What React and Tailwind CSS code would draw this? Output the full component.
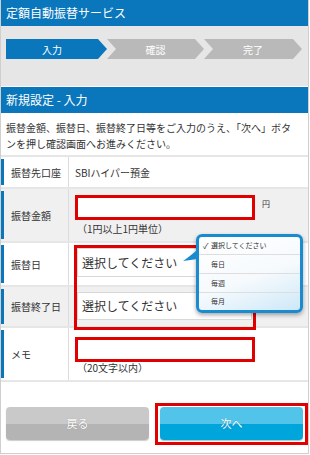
const font = { fontFamily: '"Noto Sans CJK JP", "Noto Sans", sans-serif' }

function Steps() {
  return (
    <div className="flex h-[20px] text-[10px] text-white">
      <div className="w-[101px] flex items-center justify-center pr-[9px] bg-[#0a77bc] [clip-path:polygon(0_0,calc(100%-9px)_0,100%_50%,calc(100%-9px)_100%,0_100%)]">
        入力
      </div>
      <div className="w-[97px] flex items-center justify-center bg-[#b9b9b9] [clip-path:polygon(0_0,calc(100%-9px)_0,100%_50%,calc(100%-9px)_100%,0_100%,9px_50%)]">
        確認
      </div>
      <div className="w-[98px] flex items-center justify-center bg-[#b9b9b9] [clip-path:polygon(0_0,calc(100%-9px)_0,100%_50%,calc(100%-9px)_100%,0_100%,9px_50%)]">
        完了
      </div>
    </div>
  )
}

function Row({ label, gray, height, center = true, children }) {
  return (
    <div className={`flex border-b-2 border-[#e6e6e6] ${gray ? 'bg-[#f0f0f0]' : 'bg-white'}`} style={{ height }}>
      <div className="w-[68px] flex border-r border-[#dcdcdc] shrink-0">
        <div className="w-[3px] my-[2px] bg-[#0a77bc]" />
        <div className="flex items-center pl-[7px] text-[10px] text-[#333]">{label}</div>
      </div>
      <div className={`flex-1 pl-[8px] ${center ? 'flex items-center' : ''}`}>{children}</div>
    </div>
  )
}

function RedBox({ className }) {
  return <div className={`absolute border-[3px] border-[#e00000] pointer-events-none ${className}`} />
}

function Select() {
  return (
    <div className="w-[175px] h-full bg-white border border-[#d8d8d8] flex items-center pl-[4px] text-[12px] text-[#333]">
      選択してください
    </div>
  )
}

export default function App() {
  return (
    <div className="w-[310px] h-[455px] bg-white" style={font}>
      <div className="w-[309px] h-[454px] border-x border-b border-[#cfcfcf]">
        <div className="h-[26px] bg-[#0a77bc] flex items-center pl-[5px] text-[12px] text-white">
          定額自動振替サービス
        </div>

        <div className="h-[61px] bg-[#e6e6e6] border-b border-white pt-[13px] pl-[5px]">
          <Steps />
        </div>

        <div className="h-[26px] bg-[#0a77bc] flex items-center pl-[5px] text-[12px] text-white">
          新規設定 - 入力
        </div>

        <div className="h-[42px] pt-[7px] pl-[5px] pr-[10px] text-[10px] leading-[16px] text-[#333]">
          振替金額、振替日、振替終了日等をご入力のうえ、「次へ」ボタンを押し確認画面へお進みください。
        </div>

        <div className="relative border-t-2 border-[#e6e6e6]">
          <Row label="振替先口座" height={32}>
            <span className="text-[10px] text-[#333] -ml-[2px]">SBIハイパー預金</span>
          </Row>

          <Row label="振替金額" gray height={54} center={false}>
            <div className="pt-[6px] flex items-start">
              <div className="relative w-[176px] h-[25px] bg-white border border-[#d0d0d0]">
                <RedBox className="left-[-3px] right-[-3px] top-[-1px] bottom-[-1px]" />
              </div>
              <span className="ml-[9px] mt-[3px] text-[8px] text-[#333]">円</span>
            </div>
            <div className="mt-[2px] text-[10px] leading-[14px] text-[#333]">（1円以上1円単位）</div>
          </Row>

          <Row label="振替日" height={44} center={false}>
            <div className="pt-[5px] h-[34px]">
              <Select />
            </div>
          </Row>

          <Row label="振替終了日" gray height={41} center={false}>
            <div className="pt-[5px] h-[33px]">
              <Select />
            </div>
          </Row>

          <Row label="メモ" height={54} center={false}>
            <div className="pt-[9px]">
              <div className="relative w-[176px] h-[25px] bg-white border border-[#d0d0d0]">
                <RedBox className="left-[-3px] right-[-3px] top-[-1px] bottom-[-1px]" />
              </div>
            </div>
            <div className="text-[10px] leading-[12px] text-[#333]">（20文字以内）</div>
          </Row>

          <RedBox className="left-[73px] top-[88px] w-[182px] h-[85px]" />

          <div className="absolute left-[195px] top-[77px] w-[107px] h-[79px] rounded-[6px] border-[3px] border-[#1b8bd0] bg-[linear-gradient(160deg,#ffffff_0%,#f6fafd_55%,#cde8f8_100%)] shadow-[0_2px_4px_rgba(0,0,0,0.35)] text-[7px] text-[#333]">
            <svg className="absolute left-[-16px] top-[12px]" width="14" height="14" viewBox="0 0 14 14">
              <path d="M14 1 L14 10 Q8 11 0 12 Q6 8 14 1 Z" fill="#1b8bd0" />
            </svg>
            <div className="h-[18px] flex items-center border-b border-[#dedede] pl-[4px]">
              <span className="w-[8px] text-[8px]">✓</span>
              <span>選択してください</span>
            </div>
            <div className="h-[19px] flex items-center border-b border-[#dedede] pl-[12px]">毎日</div>
            <div className="h-[19px] flex items-center border-b border-[#dedede] pl-[12px]">毎週</div>
            <div className="h-[17px] flex items-center pl-[12px]">毎月</div>
          </div>
        </div>

        <div className="pt-[25px] px-[5px] flex gap-[11px]">
          <button className="w-[143px] h-[33px] rounded-[4px] bg-[linear-gradient(#c9c9c9_50%,#b4b4b4_50%)] shadow-[0_1px_1px_rgba(0,0,0,0.2)] text-[11px] text-white [text-shadow:0_0_1px_rgba(0,0,0,0.3)]">
            戻る
          </button>
          <div className="relative">
            <button className="w-[143px] h-[33px] rounded-[4px] bg-[linear-gradient(#52c4e9_50%,#00a5db_50%)] shadow-[0_1px_1px_rgba(0,0,0,0.25)] text-[11px] text-white [text-shadow:0_0_1px_rgba(0,0,0,0.3)]">
              次へ
            </button>
            <RedBox className="left-[-5px] right-[-5px] top-[-4px] bottom-[-5px]" />
          </div>
        </div>
      </div>
    </div>
  )
}
